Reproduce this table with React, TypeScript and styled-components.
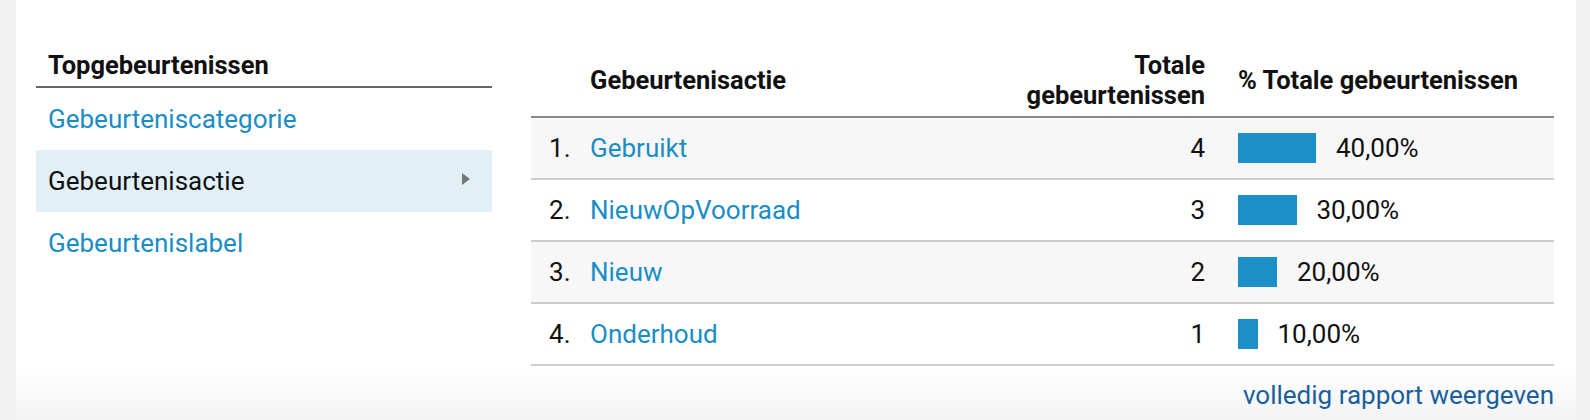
import React from 'react';
import styled, { createGlobalStyle } from 'styled-components';

const GlobalStyle = createGlobalStyle`
  html, body {
    margin: 0;
    padding: 0;
    background: #f1f1f1;
    font-family: Roboto, "Noto Sans", Arial, sans-serif;
    color: #222;
  }
`;

const Page = styled.div`
  display: flex;
  height: 420px;
  padding: 0 14px 0 16px;
  overflow: hidden;
`;

const Card = styled.div`
  flex: 1;
  display: flex;
  gap: 39px;
  padding: 50px 22px 0 20px;
  background: linear-gradient(to bottom, #ffffff 0, #ffffff 368px, #f3f3f3 420px);
`;

const SidePanel = styled.div`
  width: 456px;
  flex: none;
`;

const SideHeader = styled.div`
  font-size: 25.5px;
  font-weight: 700;
  line-height: 30px;
  padding: 0 12px 6px;
  border-bottom: 2px solid #666;
  color: #111;
`;

const SideItem = styled.div<{ $active?: boolean }>`
  display: flex;
  align-items: center;
  justify-content: space-between;
  height: 62px;
  padding: 0 22px 0 12px;
  font-size: 26px;
  color: ${(p) => (p.$active ? '#111' : '#1a8dc6')};
  background: ${(p) => (p.$active ? '#e1eff7' : 'transparent')};
`;

const Caret = styled.span`
  width: 0;
  height: 0;
  border-top: 6px solid transparent;
  border-bottom: 6px solid transparent;
  border-left: 8px solid #777;
  margin-top: -4px;
`;

const TableWrap = styled.div`
  flex: 1;
  display: flex;
  flex-direction: column;
`;

const Grid = styled.div`
  display: grid;
  grid-template-columns: 59px 1fr auto 349px;
`;

const HeadCell = styled.div<{ $right?: boolean; $pad?: boolean }>`
  display: flex;
  align-items: center;
  justify-content: ${(p) => (p.$right ? 'flex-end' : 'flex-start')};
  text-align: ${(p) => (p.$right ? 'right' : 'left')};
  padding: 0 0 6px ${(p) => (p.$pad ? '33px' : '0')};
  font-size: 25.5px;
  font-weight: 700;
  line-height: 30px;
  color: #111;
  border-bottom: 2px solid #888;
`;

const Cell = styled.div<{ $alt: boolean; $right?: boolean; $pad?: string }>`
  display: flex;
  align-items: center;
  justify-content: ${(p) => (p.$right ? 'flex-end' : 'flex-start')};
  height: 60px;
  padding-left: ${(p) => p.$pad || '0'};
  font-size: 26px;
  color: #111;
  background: ${(p) => (p.$alt ? '#f7f7f7' : '#ffffff')};
  border-bottom: 2px solid #cecece;
`;

const Link = styled.span`
  color: #1a8dc6;
`;

const Bar = styled.span`
  display: inline-block;
  height: 30px;
  background: #1b8fc6;
  margin-right: 20px;
`;

const Footer = styled.div`
  text-align: right;
  padding-top: 14px;
  font-size: 26px;
  line-height: 30px;
  color: #1a5f9c;
`;

const rows = [
  { name: 'Gebruikt', total: 4, pct: 40 },
  { name: 'NieuwOpVoorraad', total: 3, pct: 30 },
  { name: 'Nieuw', total: 2, pct: 20 },
  { name: 'Onderhoud', total: 1, pct: 10 },
];

const App = () => {
  return (
    <>
      <GlobalStyle />
      <Page>
        <Card>
          <SidePanel>
            <SideHeader>Topgebeurtenissen</SideHeader>
            <SideItem>Gebeurteniscategorie</SideItem>
            <SideItem $active>
              Gebeurtenisactie
              <Caret />
            </SideItem>
            <SideItem>Gebeurtenislabel</SideItem>
          </SidePanel>
          <TableWrap>
            <Grid>
              <HeadCell />
              <HeadCell>Gebeurtenisactie</HeadCell>
              <HeadCell $right>
                Totale
                <br />
                gebeurtenissen
              </HeadCell>
              <HeadCell $pad>% Totale gebeurtenissen</HeadCell>
              {rows.map((r, i) => {
                const alt = i % 2 === 0;
                return (
                  <React.Fragment key={r.name}>
                    <Cell $alt={alt} $pad="18px">{i + 1}.</Cell>
                    <Cell $alt={alt}>
                      <Link>{r.name}</Link>
                    </Cell>
                    <Cell $alt={alt} $right>{r.total}</Cell>
                    <Cell $alt={alt} $pad="33px">
                      <Bar style={{ width: r.pct * 1.95 }} />
                      {r.pct},00%
                    </Cell>
                  </React.Fragment>
                );
              })}
            </Grid>
            <Footer>volledig rapport weergeven</Footer>
          </TableWrap>
        </Card>
      </Page>
    </>
  );
};

export default App;
